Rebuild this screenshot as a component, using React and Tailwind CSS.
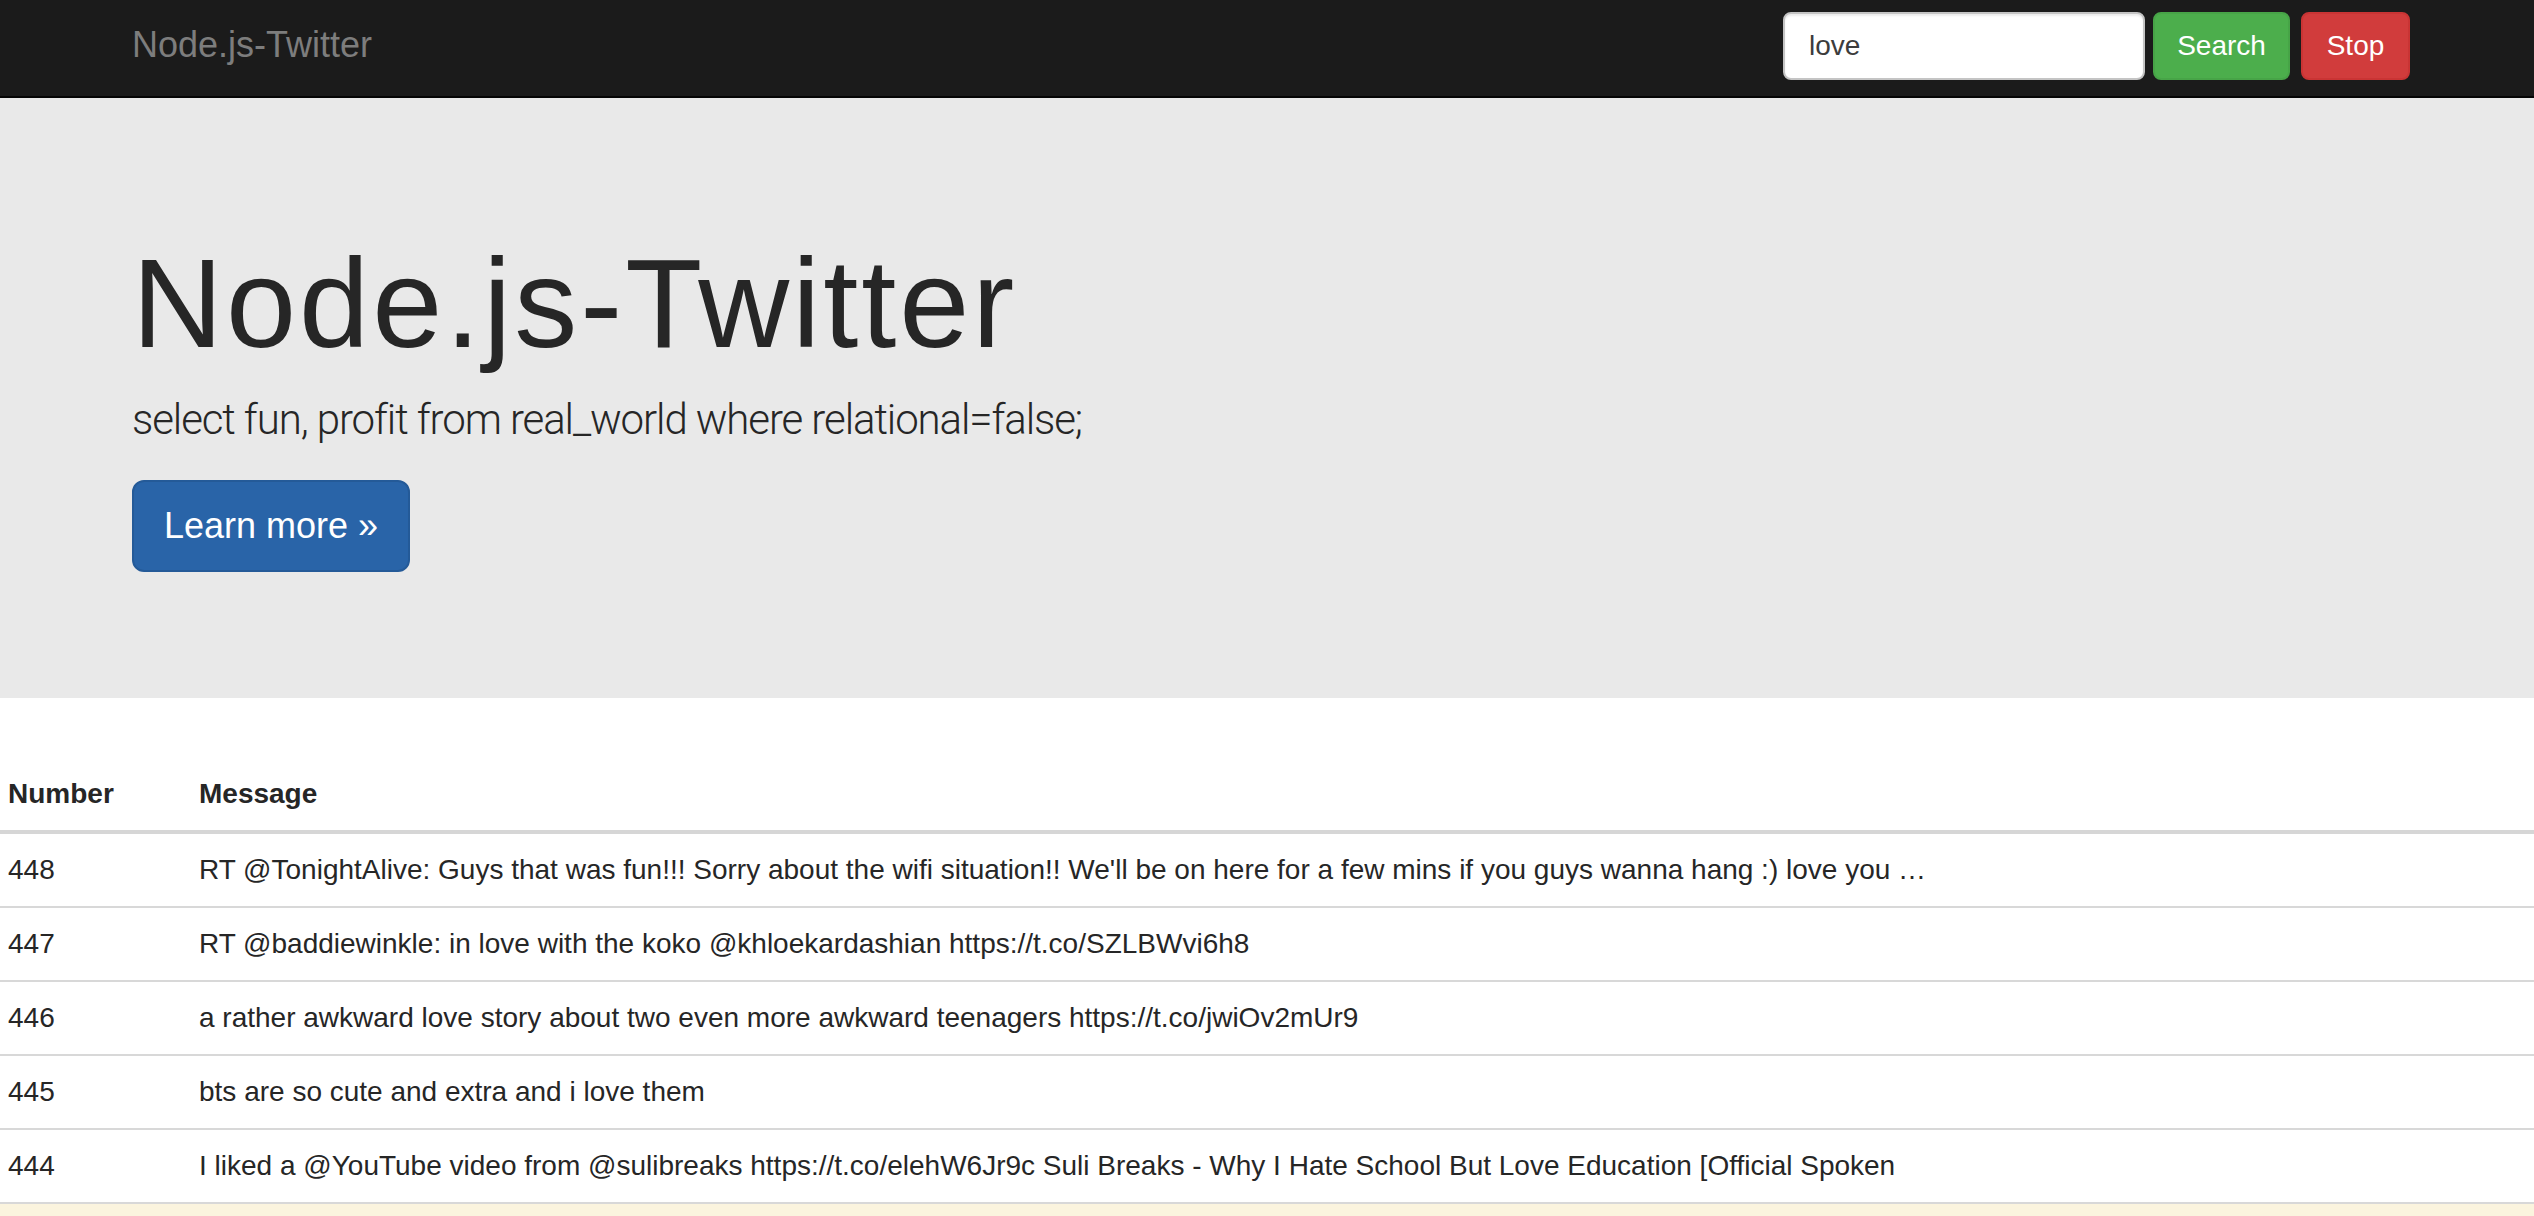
const tweets = [
  { n: 448, text: "RT @TonightAlive: Guys that was fun!!! Sorry about the wifi situation!! We'll be on here for a few mins if you guys wanna hang :) love you …" },
  { n: 447, text: "RT @baddiewinkle: in love with the koko @khloekardashian https://t.co/SZLBWvi6h8" },
  { n: 446, text: "a rather awkward love story about two even more awkward teenagers https://t.co/jwiOv2mUr9" },
  { n: 445, text: "bts are so cute and extra and i love them" },
  { n: 444, text: "I liked a @YouTube video from @sulibreaks https://t.co/elehW6Jr9c Suli Breaks - Why I Hate School But Love Education [Official Spoken" },
];

function Navbar() {
  return (
    <nav className="h-[98px] bg-[#1b1b1b] border-b-2 border-[#050505] flex justify-between pl-[132px] pr-[124px]">
      <a className="mt-[25px] text-[36px] leading-[40px] text-[#7d7d7d] h-[40px]">Node.js-Twitter</a>
      <form className="flex gap-[8px] mt-[12px] h-[68px]">
        <input
          defaultValue="love"
          className="w-[362px] h-[68px] rounded-[8px] border-2 border-[#c4c4c4] bg-white px-[24px] text-[28px] text-[#3c3c3c] outline-none shadow-[inset_0_2px_2px_rgba(0,0,0,0.08)]"
        />
        <button type="button" className="w-[137px] h-[68px] rounded-[8px] bg-[#4cae4c] border-2 border-[#47a447] text-white text-[28px]">Search</button>
        <button type="button" className="ml-[3px] w-[109px] h-[68px] rounded-[8px] bg-[#d13c3c] border-2 border-[#c93434] text-white text-[28px]">Stop</button>
      </form>
    </nav>
  );
}

function Jumbotron() {
  return (
    <section className="bg-[#e9e9e9] pl-[132px] pt-[137px] pb-[126px]">
      <h1 className="text-[126px] leading-[138px] tracking-[3px] text-[#262626]">Node.js-Twitter</h1>
      <p className="mt-[17px] text-[42px] leading-[60px] font-light tracking-[-1.1px] text-[#262626] font-['Roboto',sans-serif]">
        select fun, profit from real_world where relational=false;
      </p>
      <button type="button" className="mt-[30px] w-[278px] h-[92px] rounded-[12px] bg-[#2964a8] border-2 border-[#245a98] text-white text-[36px]">
        Learn more »
      </button>
    </section>
  );
}

export default function App() {
  return (
    <div className="h-[1216px] overflow-hidden bg-white font-['Liberation_Sans',Arial,sans-serif] text-[#262626]">
      <Navbar />
      <Jumbotron />
      <table className="mt-[60px] w-full border-collapse text-[28px] leading-[40px]">
        <thead>
          <tr className="border-b-4 border-[#d6d6d6]">
            <th className="w-[191px] py-[16px] pl-[8px] text-left font-bold">Number</th>
            <th className="py-[16px] pl-[8px] text-left font-bold">Message</th>
          </tr>
        </thead>
        <tbody>
          {tweets.map((t) => (
            <tr key={t.n} className="border-b-2 border-[#d8d8d8]">
              <td className="py-[16px] pl-[8px]">{t.n}</td>
              <td className="py-[16px] pl-[8px] whitespace-nowrap">{t.text}</td>
            </tr>
          ))}
          <tr className="bg-[#fbf4de] h-[72px]">
            <td></td>
            <td></td>
          </tr>
        </tbody>
      </table>
    </div>
  );
}
